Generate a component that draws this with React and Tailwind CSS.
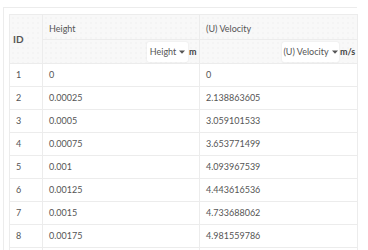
import React from "react";

const rows = [
  ["1", "0", "0"],
  ["2", "0.00025", "2.138863605"],
  ["3", "0.0005", "3.059101533"],
  ["4", "0.00075", "3.653771499"],
  ["5", "0.001", "4.093967539"],
  ["6", "0.00125", "4.443616536"],
  ["7", "0.0015", "4.733688062"],
  ["8", "0.00175", "4.981559786"],
  ["", "", ""],
];

const hdrBg =
  "bg-[#f8f8f8] bg-[radial-gradient(#e6e6e6_0.6px,transparent_0.8px)] bg-[size:5px_5px]";

function Caret() {
  return (
    <svg width="6" height="4" viewBox="0 0 6 4" className="ml-[3px]">
      <path d="M0 0.5 L6 0.5 L3 3.8 Z" fill="#555" />
    </svg>
  );
}

function Drop({ label, w }) {
  return (
    <div
      className={`flex items-center justify-center h-[20px] bg-white rounded-[2px] shadow-[0_0_2px_rgba(0,0,0,0.1)] text-[#555] ${w}`}
    >
      {label}
      <Caret />
    </div>
  );
}

export default function App() {
  return (
    <div
      className="w-[368px] h-[250px] overflow-hidden bg-white text-[9px] text-[#555]"
      style={{ fontFamily: "Lato, 'Open Sans', sans-serif" }}
    >
      <div className="h-[7px]" />
      <div className="ml-[3px] w-[354px] border-t border-l border-[#ececec] pt-[6px] pl-[5px]">
        <table className="border-collapse table-fixed w-[348px]">
          <colgroup>
            <col className="w-[33px]" />
            <col className="w-[157px]" />
            <col className="w-[158px]" />
          </colgroup>
          <thead>
            <tr className="h-[25px]">
              <th
                rowSpan={2}
                className={`${hdrBg} border border-[#ececec] text-left font-bold text-[#555] pl-[3px] align-middle text-[10px]`}
              >
                ID
              </th>
              <th
                className={`${hdrBg} border border-[#ececec] text-left font-normal pl-[6px] pt-[3px]`}
              >
                Height
              </th>
              <th
                className={`${hdrBg} border border-[#ececec] text-left font-normal pl-[6px] pt-[3px]`}
              >
                (U) Velocity
              </th>
            </tr>
            <tr className="h-[24px]">
              <th className={`${hdrBg} border border-[#ececec] font-normal p-0`}>
                <div className="flex items-center justify-end pr-[1px] gap-[1px]">
                  <Drop label="Height" w="w-[41px]" />
                  <span className="font-bold text-[#444] w-[9px] text-left">m</span>
                </div>
              </th>
              <th className={`${hdrBg} border border-[#ececec] font-normal p-0`}>
                <div className="flex items-center justify-end pr-[2px] gap-[1px]">
                  <Drop label="(U) Velocity" w="w-[57px]" />
                  <span className="font-bold text-[#444] w-[15px] text-left">m/s</span>
                </div>
              </th>
            </tr>
          </thead>
          <tbody>
            {rows.map((r, i) => (
              <tr key={i} className="h-[23px]">
                <td className="border border-[#ececec] pl-[6px]">{r[0]}</td>
                <td className="border border-[#ececec] pl-[6px]">{r[1]}</td>
                <td className="border border-[#ececec] pl-[6px]">{r[2]}</td>
              </tr>
            ))}
          </tbody>
        </table>
      </div>
    </div>
  );
}
